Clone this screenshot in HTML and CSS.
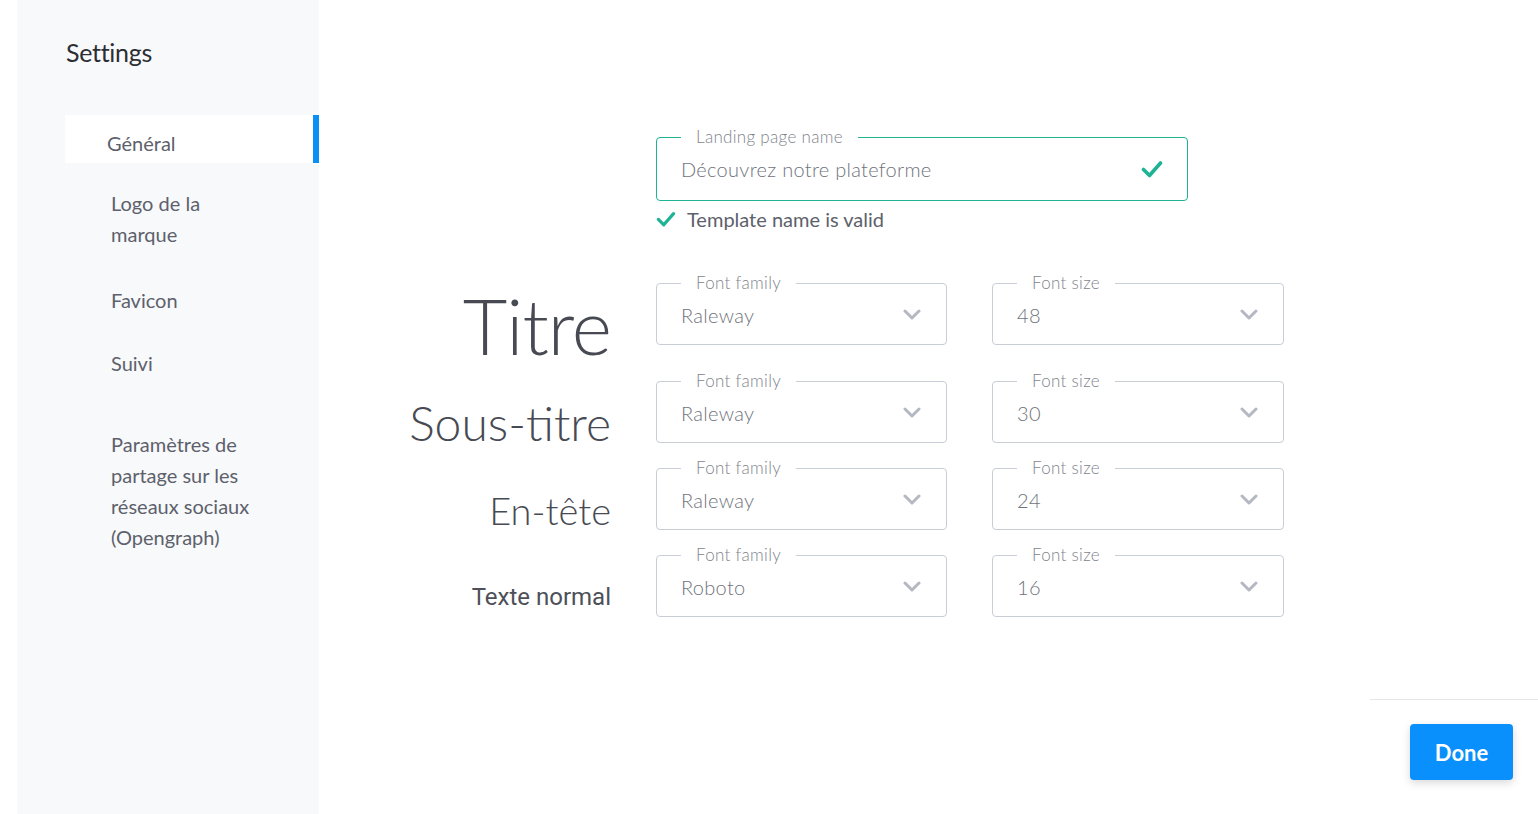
FILE: index.html
```html
<!DOCTYPE html>
<html lang="fr">
<head>
    <meta charset="UTF-8">
    <title>Settings</title>
    <link rel="stylesheet" href="styles.css">
</head>
<body>
    <div id="settings">
        <aside id="sidebar">
            <h1 class="sidebar-title">Settings</h1>
            <nav class="nav">
                <a class="nav-item active">Général</a>
                <a class="nav-item">Logo de la marque</a>
                <a class="nav-item nav-item-favicon">Favicon</a>
                <a class="nav-item">Suivi</a>
                <a class="nav-item nav-item-last">Paramètres de partage sur les réseaux sociaux (Opengraph)</a>
            </nav>
        </aside>

        <main id="content">
            <div class="form">
                <div class="landing">
                    <fieldset class="field field-valid">
                        <legend>Landing page name</legend>
                        <div class="field-body">
                            <span class="field-value">Découvrez notre plateforme</span>
                            <svg class="icon-check" width="22" height="18" viewBox="0 0 22 18">
                                <path d="M2.5 9.5l6 6L19.5 3" fill="none" stroke="#1db394" stroke-width="3.6" stroke-linecap="round" stroke-linejoin="round"/>
                            </svg>
                        </div>
                    </fieldset>
                    <div class="valid-msg">
                        <svg class="icon-check" width="20" height="16" viewBox="0 0 22 18">
                            <path d="M2.5 9.5l6 6L19.5 3" fill="none" stroke="#1db394" stroke-width="3.6" stroke-linecap="round" stroke-linejoin="round"/>
                        </svg>
                        <span>Template name is valid</span>
                    </div>
                </div>

                <div class="type-row type-row-first">
                    <div class="type-label label-titre">Titre</div>
                    <fieldset class="field">
                        <legend>Font family</legend>
                        <div class="field-body"><span class="field-value">Raleway</span><svg class="chevron" width="18" height="11" viewBox="0 0 18 11"><path d="M2 2l7 7 7-7" fill="none" stroke="#b4b8c3" stroke-width="3" stroke-linecap="round" stroke-linejoin="round"/></svg></div>
                    </fieldset>
                    <fieldset class="field">
                        <legend>Font size</legend>
                        <div class="field-body"><span class="field-value">48</span><svg class="chevron" width="18" height="11" viewBox="0 0 18 11"><path d="M2 2l7 7 7-7" fill="none" stroke="#b4b8c3" stroke-width="3" stroke-linecap="round" stroke-linejoin="round"/></svg></div>
                    </fieldset>
                </div>

                <div class="type-row">
                    <div class="type-label label-sous-titre">Sous-titre</div>
                    <fieldset class="field">
                        <legend>Font family</legend>
                        <div class="field-body"><span class="field-value">Raleway</span><svg class="chevron" width="18" height="11" viewBox="0 0 18 11"><path d="M2 2l7 7 7-7" fill="none" stroke="#b4b8c3" stroke-width="3" stroke-linecap="round" stroke-linejoin="round"/></svg></div>
                    </fieldset>
                    <fieldset class="field">
                        <legend>Font size</legend>
                        <div class="field-body"><span class="field-value">30</span><svg class="chevron" width="18" height="11" viewBox="0 0 18 11"><path d="M2 2l7 7 7-7" fill="none" stroke="#b4b8c3" stroke-width="3" stroke-linecap="round" stroke-linejoin="round"/></svg></div>
                    </fieldset>
                </div>

                <div class="type-row">
                    <div class="type-label label-entete">En-tête</div>
                    <fieldset class="field">
                        <legend>Font family</legend>
                        <div class="field-body"><span class="field-value">Raleway</span><svg class="chevron" width="18" height="11" viewBox="0 0 18 11"><path d="M2 2l7 7 7-7" fill="none" stroke="#b4b8c3" stroke-width="3" stroke-linecap="round" stroke-linejoin="round"/></svg></div>
                    </fieldset>
                    <fieldset class="field">
                        <legend>Font size</legend>
                        <div class="field-body"><span class="field-value">24</span><svg class="chevron" width="18" height="11" viewBox="0 0 18 11"><path d="M2 2l7 7 7-7" fill="none" stroke="#b4b8c3" stroke-width="3" stroke-linecap="round" stroke-linejoin="round"/></svg></div>
                    </fieldset>
                </div>

                <div class="type-row">
                    <div class="type-label label-texte">Texte normal</div>
                    <fieldset class="field">
                        <legend>Font family</legend>
                        <div class="field-body"><span class="field-value">Roboto</span><svg class="chevron" width="18" height="11" viewBox="0 0 18 11"><path d="M2 2l7 7 7-7" fill="none" stroke="#b4b8c3" stroke-width="3" stroke-linecap="round" stroke-linejoin="round"/></svg></div>
                    </fieldset>
                    <fieldset class="field">
                        <legend>Font size</legend>
                        <div class="field-body"><span class="field-value">16</span><svg class="chevron" width="18" height="11" viewBox="0 0 18 11"><path d="M2 2l7 7 7-7" fill="none" stroke="#b4b8c3" stroke-width="3" stroke-linecap="round" stroke-linejoin="round"/></svg></div>
                    </fieldset>
                </div>
            </div>

            <footer class="footer">
                <button class="done-button">Done</button>
            </footer>
        </main>
    </div>
</body>
</html>
```

FILE: styles.css
```css
* {
    box-sizing: border-box;
}

html, body {
    height: 100%;
}

body {
    margin: 0;
    background-color: #fff;
    font-family: "Lato", "Liberation Sans", sans-serif;
    color: #5d616b;
}

#settings {
    display: flex;
    height: 100%;
    padding-left: 17px;
}

/* sidebar */

#sidebar {
    width: 302px;
    flex-shrink: 0;
    background-color: #f8f9fb;
    padding-top: 36px;
}

.sidebar-title {
    margin: 0 0 0 49px;
    font-size: 25px;
    font-weight: 400;
    line-height: 33px;
    color: #2c2e33;
    letter-spacing: -0.3px;
}

.nav {
    display: flex;
    flex-direction: column;
    margin-top: 46px;
    margin-left: 48px;
}

.nav-item {
    display: block;
    padding-left: 46px;
    padding-right: 62px;
    margin-top: 32px;
    font-size: 20px;
    line-height: 31px;
    color: #5d616b;
    cursor: pointer;
}

.nav-item.active {
    margin-top: 0;
    height: 48px;
    padding-top: 13px;
    padding-left: 42px;
    background-color: #fff;
    border-right: 6px solid #0a8ff5;
}

.nav-item.active + .nav-item {
    margin-top: 25px;
}

.nav-item-favicon {
    margin-top: 35px;
}

.nav-item-last {
    margin-top: 50px;
}

/* main content */

#content {
    flex: 1;
    display: flex;
    flex-direction: column;
    padding-left: 42px;
}

.form {
    display: flex;
    flex-direction: column;
    padding-top: 128px;
}

.landing {
    margin-left: 295px;
    width: 532px;
    margin-bottom: 43px;
}

.field {
    margin: 0;
    padding: 0 24px;
    border: 1px solid #c9cdd6;
    border-radius: 4px;
    min-width: 0;
}

.field legend {
    padding: 0 15px;
    font-size: 17px;
    font-weight: 300;
    line-height: 18px;
    letter-spacing: 0.3px;
    color: #80848d;
}

.field-valid {
    border-color: #1db394;
}

.field-body {
    display: flex;
    align-items: center;
    justify-content: space-between;
    height: 54px;
    padding-bottom: 9px;
}

.field-value {
    font-size: 20px;
    font-weight: 300;
    color: #6f737c;
    letter-spacing: 0.3px;
}

.chevron {
    display: block;
    margin-right: 1px;
}

.valid-msg {
    display: flex;
    align-items: center;
    gap: 11px;
    margin-top: 6px;
    font-size: 20px;
    line-height: 24px;
    color: #5d616b;
}

.type-row {
    display: grid;
    grid-template-columns: 250px 291px 292px;
    grid-template-rows: 71px;
    column-gap: 45px;
    margin-bottom: 16px;
}

.type-row-first {
    margin-bottom: 27px;
}

.type-label {
    align-self: center;
    margin-top: 31px;
    text-align: right;
    line-height: 1;
    font-weight: 300;
    color: #474a52;
    white-space: nowrap;
}

.label-titre {
    font-size: 77px;
    letter-spacing: -1px;
}

.label-sous-titre {
    font-size: 48px;
}

.label-entete {
    font-size: 38px;
}

.label-texte {
    font-family: "Roboto", sans-serif;
    font-weight: 400;
    font-size: 24px;
    color: #4d5058;
}

/* footer */

.footer {
    margin-top: auto;
    align-self: flex-end;
    width: 168px;
    border-top: 1px solid #e6e7ea;
    padding: 24px 25px 34px 0;
    display: flex;
    justify-content: flex-end;
}

.done-button {
    width: 103px;
    height: 56px;
    border: none;
    border-radius: 4px;
    background-color: #0a90fc;
    color: #fff;
    font-family: "Lato", sans-serif;
    font-size: 22px;
    font-weight: 700;
    box-shadow: 0 3px 8px rgba(0, 0, 0, 0.15);
    cursor: pointer;
}

.done-button:focus {
    outline: none;
}
```
